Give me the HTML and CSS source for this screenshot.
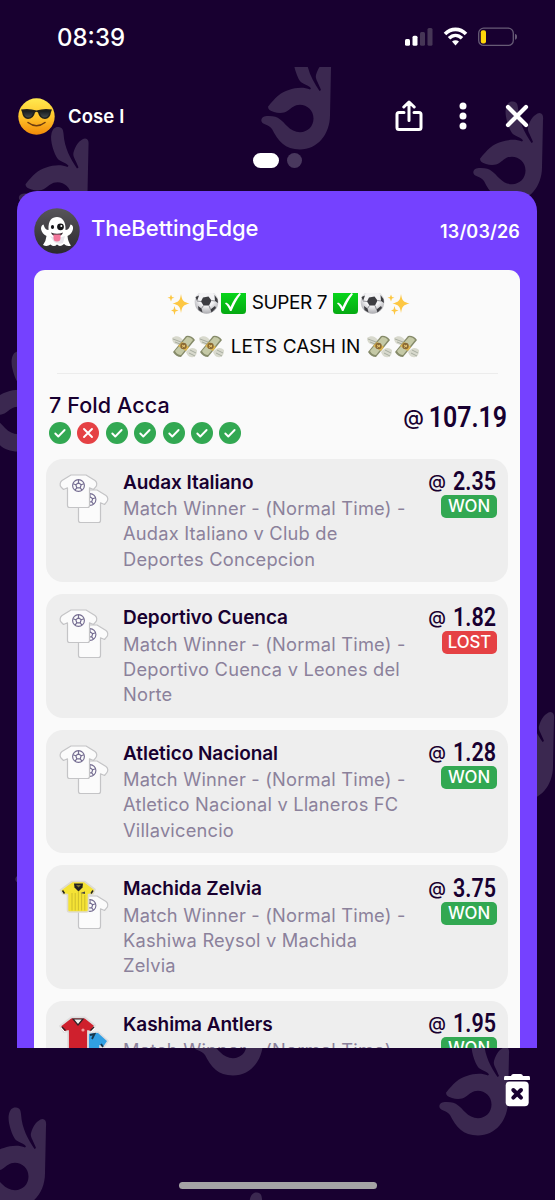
FILE: index.html
```html
<!DOCTYPE html>
<html lang="en">
<head>
<meta charset="utf-8">
<title>Bet slip story</title>
<link rel="stylesheet" href="styles.css">
</head>
<body>
<svg class="defs" aria-hidden="true">
  <defs>
    <linearGradient id="sun" x1="0" y1="0" x2="0" y2="1"><stop offset="0" stop-color="#ffe94f"/><stop offset=".5" stop-color="#ffc52c"/><stop offset="1" stop-color="#f28a08"/></linearGradient>
    <linearGradient id="lens" x1="0" y1="0" x2="0" y2="1"><stop offset="0" stop-color="#15191c"/><stop offset="1" stop-color="#454b4d"/></linearGradient>
    <linearGradient id="dark" x1="0" y1="0" x2="0" y2="1"><stop offset="0" stop-color="#575559"/><stop offset="1" stop-color="#2b292e"/></linearGradient>
    <linearGradient id="green" x1="0" y1="0" x2="0" y2="1"><stop offset="0" stop-color="#08d51b"/><stop offset="1" stop-color="#05a912"/></linearGradient>
    <radialGradient id="ballshade" cx=".5" cy=".35" r=".65"><stop offset=".5" stop-color="#f3f3f5"/><stop offset="1" stop-color="#a9a9ae"/></radialGradient>
    <symbol id="hand" viewBox="0 0 71 101">
      <path fill-rule="evenodd" d="M7 57.7C14 49 20 43 27.7 41C35 38.500 43 38 49 40.500L50 39.300C46 35 41 35 39 32C36 28 31 14 33 7C34 2 37 0 40 .5C44 1 44.500 3 45 7C46 22 52 32 58.500 42L60 41C57 33 54 30 55 26C57 19 61 13 66.500 12C69.500 12 70.500 15 70 19L69 66C69 86 56 100.500 39 100.500C24 100.500 17 92 11 80C8 75 0 76 .3 71C1 67 5 67 8 67C18 67 21 72 26 77C30 81 34 83.200 39 83.200C47 83.200 52.500 77 52.500 69.500C52.500 61 46 55.700 39 55.700C33 55.700 31 59 27 61.500C22 65 17 64 13 63C9 62 7 60 7 57.700Z"/>
    </symbol>
    <symbol id="tick" viewBox="0 0 22 22"><circle cx="11" cy="11" r="11" fill="#32a852"/><path d="M6.300 11.500L9.300 14.500L15.600 8" fill="none" stroke="#fff" stroke-width="1.900" stroke-linecap="round" stroke-linejoin="round"/></symbol>
    <symbol id="cross" viewBox="0 0 22 22"><circle cx="11" cy="11" r="11" fill="#e54144"/><path d="M7 7L15 15M15 7L7 15" stroke="#fff" stroke-width="1.900" stroke-linecap="round"/></symbol>
    <symbol id="badge" viewBox="0 0 14 14"><g fill="none" stroke="#746c91" stroke-width="1.150"><circle cx="7" cy="7" r="5.900"/><path d="M7 4.200L9.700 6.200L8.700 9.300H5.300L4.300 6.200ZM7 4.200V1.200M9.700 6.200L12.500 5.200M8.700 9.300L10.500 11.700M5.300 9.300L3.500 11.700M4.300 6.200L1.500 5.200"/></g></symbol>
    <symbol id="shirt" viewBox="0 0 39 35"><path d="M12 1H27L36 6.500C38 8 38.500 11 36.500 13.200L34.500 15.500L30.500 13.800V31.500Q30.500 33.500 28.500 33.500H10.500Q8.500 33.500 8.500 31.500V13.800L4.500 15.500L2 13C.5 11 1 8 3 6.500Z" fill="#fbfbfb" stroke="#c4c4c6" stroke-width="1.200" stroke-linejoin="round"/></symbol>
    <symbol id="kits" viewBox="0 0 52 50"><use href="#shirt" x="11" y="15" width="39" height="35"/><use href="#badge" x="24" y="18.500" width="14" height="14"/><use href="#shirt" x="0" y="0" width="39" height="35"/><use href="#badge" x="12.500" y="4.500" width="14" height="14"/></symbol>
    <symbol id="kits-yellow" viewBox="0 0 52 50"><use href="#shirt" x="11" y="15" width="39" height="35"/><use href="#badge" x="24" y="18.500" width="14" height="14"/><path d="M13 1.500H25.500L36 9.500L34 14L29.500 14.500V30Q29.500 32 27.500 32H10.500Q8.500 32 8.500 30V14.500L4 14L1.500 10Z" fill="#f5e335" stroke="#dedbd0" stroke-width="1.600" stroke-linejoin="round"/><path d="M13 13V30.500M16.200 13V30.500M19.400 12V30.500M22.600 13V30.500M25.800 15V30.500" stroke="#c9b92c" stroke-width=".9"/><path d="M15 3.500H24L23.500 7.500L19.500 11.500L15.500 7.500Z" fill="#222"/><path d="M17 5H22L19.500 7.500Z" fill="#77702e"/><path d="M3.500 10.500L5.500 13.500M32 13.500L34 10.500" stroke="#222" stroke-width="1.500"/><path d="M21.500 13L26 11.500V14Z" fill="#444"/></symbol>
    <symbol id="kits-red" viewBox="0 0 52 50"><path d="M30 17L39 16L49 25L45 31L41 30V48H24V24Z" fill="#319fe3" stroke="#dcdcde" stroke-width="1.600"/><path d="M31 19L35.500 18L33 23M42 28L44 31" fill="none" stroke="#17364b" stroke-width="1.800"/><path d="M12 1.500H26L36 9.500L32 16L29 15V34H9V15L5 16L1 10Z" fill="#cf202d" stroke="#dedede" stroke-width="1.800" stroke-linejoin="round"/><path d="M14 3H24L19 9Z" fill="#eee" stroke="#302226" stroke-width="1.200"/><path d="M3 11L6.500 14.500M31.500 14.500L35 11" stroke="#302226" stroke-width="1.300"/><path d="M2 12L6 16M36 12L32 16" stroke="#fff"/><circle cx="24" cy="14" r="1.600" fill="#ef9b9b"/></symbol>
    <symbol id="e-spark" viewBox="0 0 24 24"><g fill="#fdc743"><path d="M13.500 1C14.500 8 16 9 22 10.500C16 12 14.500 13 13.500 20C12.500 13 11 12 5 10.500C11 9 12.500 8 13.500 1Z"/><path d="M3.500 1.500L4.500 4L7 4.800L4.500 5.600L3.500 8.500L2.500 5.600L0 4.800L2.500 4ZM7 13L8 16.500L11 17.500L8 18.500L7 22L6 18.500L3.500 17.500L6 16.500Z"/></g></symbol>
    <symbol id="e-ball" viewBox="0 0 24 24"><circle cx="12" cy="9" r="11.800" fill="url(#ballshade)"/><path d="M8.500 4.500L14 3.500L17 7.500L14.500 12.500H9L6.500 8.500ZM1 4L4.500 2.500L2.500 8ZM20 2L23 6L23.500 10L20.500 8ZM3.500 13L7 15.500L8 19.500L4 17ZM16 16.500L20.500 13L21.500 15L17 19.500Z" fill="#3d3d42"/><path d="M9 12.500L7 15.500M14.500 12.500L16 16.500M17 7.500L20.500 8M6.500 8.500L2.500 8" stroke="#77777d" stroke-width=".8"/></symbol>
    <symbol id="e-check" viewBox="0 0 25 24"><path d="M0 0H25V17.500Q25 21 21.500 21H3.500Q0 21 0 17.500Z" fill="url(#green)"/><path d="M5 9.500C7 10 8.500 12 9.500 14C12 8 15 3.500 18.500 0L20 1C15.500 7 13 12 10.500 18H9C7.500 14.500 6 12 4 10.500Z" fill="#fff"/></symbol>
    <symbol id="e-cash" viewBox="0 0 25 24"><path d="M0 3C4 0 8 1 11 5L8 10C4 10 0 8 0 3ZM14 17C18 12 22 12 25 15C25 20 23 23 19 22C17 22 15 20 14 17Z" fill="#d8d9cd"/><path d="M1 4L9 7M3 7L8 9M18 15L24 18M17 18L23 21" stroke="#929a8c" stroke-width=".7"/><path d="M1 17L14 1Q19 0 23 5L9 22Q4 22 1 17Z" fill="#858a69"/><path d="M3 16L15 2Q19 2 21 5L9 20Q5 20 3 16Z" fill="#c5c9a6"/><path d="M6 11L10 7L17 12L14 16Z" fill="#ddb651"/><circle cx="11.500" cy="11" r="3.200" fill="#8b6a35"/><path d="M10 12.500L13 10M10 10L13 12" stroke="#f3d57c" stroke-width=".9"/></symbol>
  </defs>
</svg>
<div class="screen">
  <div class="pattern" aria-hidden="true">
    <svg class="hands" viewBox="0 0 555 1133">
      <g fill="#3b2850">
        <use href="#hand" x="261" y="-18" width="71" height="101"/>
        <use href="#hand" x="473" y="34" width="71" height="101"/>
        <use href="#hand" x="18.500" y="59.500" width="71" height="101"/>
        <use href="#hand" x="-21" y="284" width="71" height="101"/>
        <use href="#hand" x="484" y="633" width="71" height="101"/>
        <use href="#hand" x="15" y="741" width="71" height="101"/>
        <use href="#hand" x="194" y="908" width="71" height="101"/>
        <use href="#hand" x="439" y="968" width="71" height="101"/>
        <use href="#hand" x="-24" y="1040" width="71" height="101"/>
        <use href="#hand" x="217" y="1125" width="71" height="101"/>
      </g>
    </svg>
  </div>

  <header class="status">
    <span class="clock">08:39</span>
    <svg class="status-icons" viewBox="0 0 114 20">
      <rect x="1" y="12" width="5" height="6.800" rx="1.500" fill="#fff"/><rect x="8.500" y="8.800" width="5" height="10" rx="1.500" fill="#fff"/><rect x="16" y="5" width="5" height="13.800" rx="1.500" fill="#463656"/><rect x="23.500" y="1" width="5" height="17.800" rx="1.500" fill="#463656"/>
      <path d="M41 7C47 .8 56 .8 62 7" fill="none" stroke="#fff" stroke-width="3.600"/><path d="M45 11.300C49 7.400 54 7.400 58 11.300" fill="none" stroke="#fff" stroke-width="3.500"/><path d="M48 14.600Q51.500 11.700 55 14.600L51.500 18.500Z" fill="#fff"/>
      <rect x="74.700" y="1.200" width="34.600" height="17.200" rx="5" fill="none" stroke="#675b76" stroke-width="1.300"/><rect x="76.800" y="3.200" width="5.200" height="13.200" rx="2" fill="#ffd60a"/><path d="M111 7Q113 7 113 9.800Q113 12.600 111 12.600Z" fill="#675b76"/>
    </svg>
  </header>

  <nav class="topbar">
    <svg class="avatar" viewBox="0 0 37 37"><circle cx="18.500" cy="18.500" r="18.200" fill="url(#sun)"/><path d="M3 11.500Q11 10 18.500 12.500Q26 10 34 11.500L33 14Q32 21 27 21Q21.500 21 20 14.500Q18.500 13 17 14.500Q15.500 21 10 21Q5 21 4 14Z" fill="#20201c"/><path d="M5.500 13Q11 12 15.500 14Q14 19.500 10 19.500Q6 19.500 5.500 13ZM21.500 14Q26 12 31.500 13Q31 19.500 27 19.500Q23 19.500 21.500 14Z" fill="url(#lens)"/><path d="M10 24.500Q18.500 31 27 24.500" fill="none" stroke="#6b3b10" stroke-width="1.500" stroke-linecap="round"/></svg>
    <span class="story-name">Cose I</span>
    <div class="actions">
      <svg width="28" height="32" viewBox="0 0 28 32" fill="none" stroke="#fff" stroke-width="3" stroke-linecap="round" stroke-linejoin="round"><path d="M9 12.500H4Q2 12.500 2 14.500V27.500Q2 29.500 4 29.500H24Q26 29.500 26 27.500V14.500Q26 12.500 24 12.500H19M14 20.500V3M8.800 7L14 2L19.200 7"/></svg>
      <svg width="8" height="28" viewBox="0 0 8 28" fill="#fff"><circle cx="4" cy="4" r="3.500"/><circle cx="4" cy="14" r="3.500"/><circle cx="4" cy="24" r="3.500"/></svg>
      <svg width="24" height="24" viewBox="0 0 24 24" stroke="#fff" stroke-width="4.200" stroke-linecap="round"><path d="M3 3L21 21M21 3L3 21"/></svg>
    </div>
  </nav>

  <div class="pager"><i class="page current"></i><i class="page"></i></div>

  <main class="story">
    <div class="author">
      <svg class="ghost" viewBox="0 0 46 46"><circle cx="23" cy="23" r="22.700" fill="url(#dark)"/><path d="M14.500 22C14 12 18 9 23 9C28 9 32 13 31.500 22Q35 22 36.500 16.500Q39.500 17 39 21Q38 26 33.500 28Q34 34 37 37.500Q33 39 30 36Q26 39.500 23 36.500Q20 39.500 16.500 36.500Q13 39 9 37Q12 33 12.500 28Q8 26 7 21Q7 17 9.500 16.500Q11 22 14.500 22Z" fill="#fff"/><path d="M16 28Q23 31 31 28L29 35Q25 37 20 34Z" fill="#e8e5eb"/><ellipse cx="18.500" cy="19" rx="1.600" ry="2" fill="#151518"/><circle cx="26.500" cy="18.800" r="3.400" fill="#151518"/><circle cx="27.300" cy="18" r="1" fill="#fff"/><path d="M17 24.500Q23 27 29 24.500Q28 28 23 28Q18 28 17 24.500Z" fill="#35272e"/><path d="M19.500 26.500H26.500V30Q26.500 33.500 23 33.500Q19.500 33.500 19.500 30Z" fill="#f2779b"/></svg>
      <span class="author-name">TheBettingEdge</span>
      <time class="date">13/03/26</time>
    </div>
    <section class="slip">
      <div class="caption first">
        <span class="emojis"><svg><use href="#e-spark"/></svg><svg><use href="#e-ball"/></svg><svg><use href="#e-check"/></svg></span>
        <span class="t-super">SUPER 7</span>
        <span class="emojis"><svg><use href="#e-check"/></svg><svg><use href="#e-ball"/></svg><svg><use href="#e-spark"/></svg></span>
      </div>
      <div class="caption second">
        <span class="emojis"><svg><use href="#e-cash"/></svg><svg><use href="#e-cash"/></svg></span>
        <span class="t-cash">LETS CASH IN</span>
        <span class="emojis"><svg><use href="#e-cash"/></svg><svg><use href="#e-cash"/></svg></span>
      </div>
      <div class="summary">
        <div class="fold">
          <h1>7 Fold Acca</h1>
          <div class="results"><svg><use href="#tick"/></svg><svg><use href="#cross"/></svg><svg><use href="#tick"/></svg><svg><use href="#tick"/></svg><svg><use href="#tick"/></svg><svg><use href="#tick"/></svg><svg><use href="#tick"/></svg></div>
        </div>
        <div class="total"><span class="at">@</span><b>107.19</b></div>
      </div>
      <div class="bets">
        <article class="bet"><svg class="kit"><use href="#kits"/></svg><div class="info"><h2>Audax Italiano</h2><p>Match Winner - (Normal Time) -<br>Audax Italiano v Club de<br>Deportes Concepcion</p></div><div class="odds"><div class="price"><span class="at">@</span><b>2.35</b></div><span class="tag won">WON</span></div></article>
        <article class="bet"><svg class="kit"><use href="#kits"/></svg><div class="info"><h2>Deportivo Cuenca</h2><p>Match Winner - (Normal Time) -<br>Deportivo Cuenca v Leones del<br>Norte</p></div><div class="odds"><div class="price"><span class="at">@</span><b>1.82</b></div><span class="tag lost">LOST</span></div></article>
        <article class="bet"><svg class="kit"><use href="#kits"/></svg><div class="info"><h2>Atletico Nacional</h2><p>Match Winner - (Normal Time) -<br>Atletico Nacional v Llaneros FC<br>Villavicencio</p></div><div class="odds"><div class="price"><span class="at">@</span><b>1.28</b></div><span class="tag won">WON</span></div></article>
        <article class="bet"><svg class="kit"><use href="#kits-yellow"/></svg><div class="info"><h2>Machida Zelvia</h2><p>Match Winner - (Normal Time) -<br>Kashiwa Reysol v Machida<br>Zelvia</p></div><div class="odds"><div class="price"><span class="at">@</span><b>3.75</b></div><span class="tag won">WON</span></div></article>
        <article class="bet"><svg class="kit"><use href="#kits-red"/></svg><div class="info"><h2>Kashima Antlers</h2><p>Match Winner - (Normal Time)</p></div><div class="odds"><div class="price"><span class="at">@</span><b>1.95</b></div><span class="tag won">WON</span></div></article>
      </div>
    </section>
  </main>

  <footer class="bottom">
    <svg class="trash" viewBox="0 0 28 34"><path d="M2 3H8Q8.500 1 10.500 1H17.500Q19.500 1 20 3H26Q27 3 27 5V6.500Q27 7 26 7H2Q1 7 1 6.500V5Q1 3 2 3Z" fill="#fff"/><rect x="2.700" y="8.500" width="23" height="24.700" rx="4" fill="#fff"/><path d="M10.300 17L18 24.700M18 17L10.300 24.700" stroke="#180030" stroke-width="4" stroke-linecap="round"/></svg>
    <div class="home"></div>
  </footer>
</div>
</body>
</html>
```
FILE: styles.css
```css
* { box-sizing: border-box; }
body { margin: 0; background: #180030; }
h1, h2, p { margin: 0; font-weight: inherit; }
.defs { position: absolute; width: 0; height: 0; }

.screen {
  position: relative;
  display: flex;
  flex-direction: column;
  width: 555px;
  height: 1200px;
  overflow: hidden;
  background: #180030;
  color: #fff;
  font-family: Inter, "Liberation Sans", sans-serif;
  white-space: nowrap;
}
.screen > * { position: relative; }
.screen > .pattern { position: absolute; left: 0; top: 67px; width: 555px; height: 1133px; overflow: hidden; }
.hands { display: block; width: 555px; height: 1133px; }

.status { display: flex; justify-content: space-between; height: 67px; padding: 23px 37px 0 57px; }
.clock { font-size: 24px; font-weight: 500; line-height: 30px; }
.status-icons { width: 114px; height: 20px; margin-top: 4px; }

.topbar { display: flex; align-items: center; flex: none; height: 98px; padding: 0 26px 0 18px; }
.avatar { width: 37px; height: 37px; }
.story-name { margin-left: 13px; font-size: 18.5px; font-weight: 600; letter-spacing: .1px; }
.actions { display: flex; align-items: center; margin-left: auto; }
.actions svg + svg { margin-left: 36px; }
.actions svg:last-child { margin-left: 38px; }

.pager { display: flex; gap: 8px; height: 38px; margin-top: -12px; padding-left: 253px; flex: none; }
.page { width: 15px; height: 15px; border-radius: 8px; background: #49385e; }
.page.current { width: 26px; background: #fff; }

.story { width: 520px; height: 857px; flex: none; margin-left: 17px; padding: 0 17px; overflow: hidden; background: #7541ff; border-radius: 20px 20px 0 0; }
.author { display: flex; height: 79px; padding-top: 16.500px; }
.ghost { width: 46px; height: 46px; }
.author-name { margin-left: 11px; padding-top: 6px; font-size: 22px; line-height: 28px; font-weight: 500; letter-spacing: -.05px; }
.date { margin-left: auto; padding-top: 12px; font-size: 18px; line-height: 24px; font-weight: 600; letter-spacing: .15px; }

.slip { width: 486px; height: 800px; padding-top: 22.500px; border-radius: 11px 11px 0 0; background: #fafafa; color: #180030; }
.caption { display: flex; justify-content: center; color: #050505; font-size: 19px; line-height: 20px; }
.emojis { display: flex; gap: 2px; }
.emojis svg { width: 25px; height: 24px; }
.t-super { letter-spacing: -.4px; }
.first { gap: 6px; height: 42.500px; padding-left: 25px; }
.second { gap: 7px; width: 441px; height: 39px; margin: 0 auto; padding: 2px 0 0 37px; border-bottom: 1px solid #ececec; }
.second .emojis svg { margin-top: -2px; }

.summary { display: flex; justify-content: space-between; height: 84.500px; padding: 18px 13px 0 15px; }
.fold h1 { font-size: 21.5px; line-height: 26px; font-weight: 500; letter-spacing: .1px; }
.results { display: flex; gap: 6.400px; margin-top: 4px; }
.results svg { width: 22px; height: 22px; }
.at { font-family: Inter, sans-serif; font-weight: 500; }
.total, .price { display: flex; align-items: center; }
.total b, .price b { font-family: Roboto, sans-serif; font-weight: 600; transform-origin: right; transform: scaleX(.86); }
.total { height: 50px; font-size: 29px; }
.total b { margin-left: -8px; }
.total .at { font-size: 21px; }

.bets { display: flex; flex-direction: column; gap: 12px; padding: 0 12px; }
.bet { display: flex; height: 123.600px; flex: none; padding: 10px 11px 0 13px; border-radius: 17px; background: #eee; }
.kit { width: 52px; height: 50px; margin-top: 5px; }
.info { margin-left: 12px; }
.info h2 { font-size: 19px; line-height: 28px; font-weight: 600; letter-spacing: -.05px; }
.info p { margin-top: -.6px; color: #8b819b; font-size: 18.300px; line-height: 25.300px; letter-spacing: .2px; }
.odds { display: flex; flex-direction: column; align-items: flex-end; margin-left: auto; }
.price { height: 26px; margin-right: 1px; font-size: 25px; }
.price .at { font-size: 18px; }
.tag { width: 56px; height: 23px; margin-top: .5px; border-radius: 5px; color: #fff; font-size: 16.800px; line-height: 23px; font-weight: 500; text-align: center; }
.won { background: #32a852; }
.lost { width: 55px; background: #e54144; }

.bottom { flex: 1; display: flex; flex-direction: column; }
.trash { width: 28px; height: 34px; margin: 25px 24px 0 auto; }
.home { width: 198px; height: 7px; margin: auto 0 11.500px 179px; border-radius: 4px; background: #a5a3a5; }
```
